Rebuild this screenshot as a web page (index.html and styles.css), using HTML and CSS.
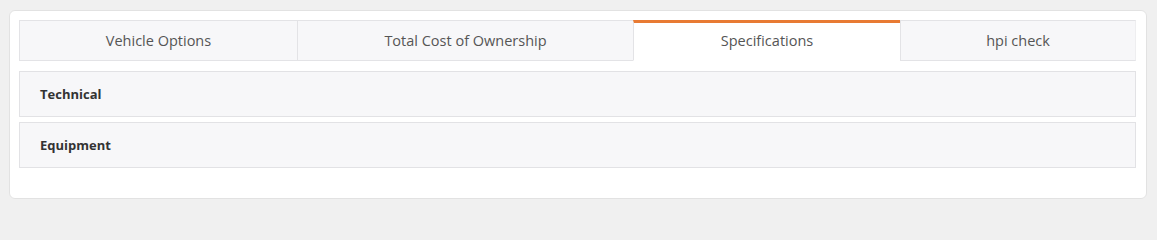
FILE: index.html
```html
<!DOCTYPE html>
<html lang="en">
<head>
<meta charset="utf-8">
<title>Vehicle details</title>
<link rel="stylesheet" href="styles.css">
</head>
<body>
<div class="card">
  <ul class="tabs">
    <li class="tab">Vehicle Options</li>
    <li class="tab">Total Cost of Ownership</li>
    <li class="tab active">Specifications</li>
    <li class="tab last">hpi check</li>
  </ul>
  <div class="panels">
    <div class="panel">Technical</div>
    <div class="panel">Equipment</div>
  </div>
</div>
</body>
</html>
```
FILE: styles.css
```css
html, body {
  background: #f0f0f0;
}
body {
  margin: 10px 10px 10px 9px;
  font-family: "Open Sans", "Liberation Sans", sans-serif;
}
.card {
  background: #ffffff;
  border: 1px solid #e2e2e2;
  border-radius: 6px;
  padding: 9px 10px 30px 9px;
  height: 148px;
}
.tabs {
  list-style: none;
  margin: 0;
  padding: 0;
  display: grid;
  grid-template-columns: 278fr 336fr 267fr 236fr;
}
.tab {
  box-sizing: border-box;
  height: 41px;
  line-height: 39px;
  text-align: center;
  font-size: 14.5px;
  color: #555555;
  background: #f7f7f9;
  border-top: 1px solid #e3e3e6;
  border-bottom: 1px solid #e3e3e6;
  border-left: 1px solid #e3e3e6;
}
.tab.last {
  border-right: 1px solid #eeeef0;
}
.tab.active {
  background: #ffffff;
  border-top: 3px solid #e87a33;
  border-bottom: 1px solid transparent;
  line-height: 35px;
}
.panels {
  display: flex;
  flex-direction: column;
  gap: 5px;
  margin-top: 10px;
}
.panel {
  box-sizing: border-box;
  height: 46px;
  line-height: 44px;
  padding: 0 20px;
  background: #f7f7f9;
  border: 1px solid #e2e2e5;
  font-size: 13px;
  font-weight: 700;
  color: #333333;
}
```
